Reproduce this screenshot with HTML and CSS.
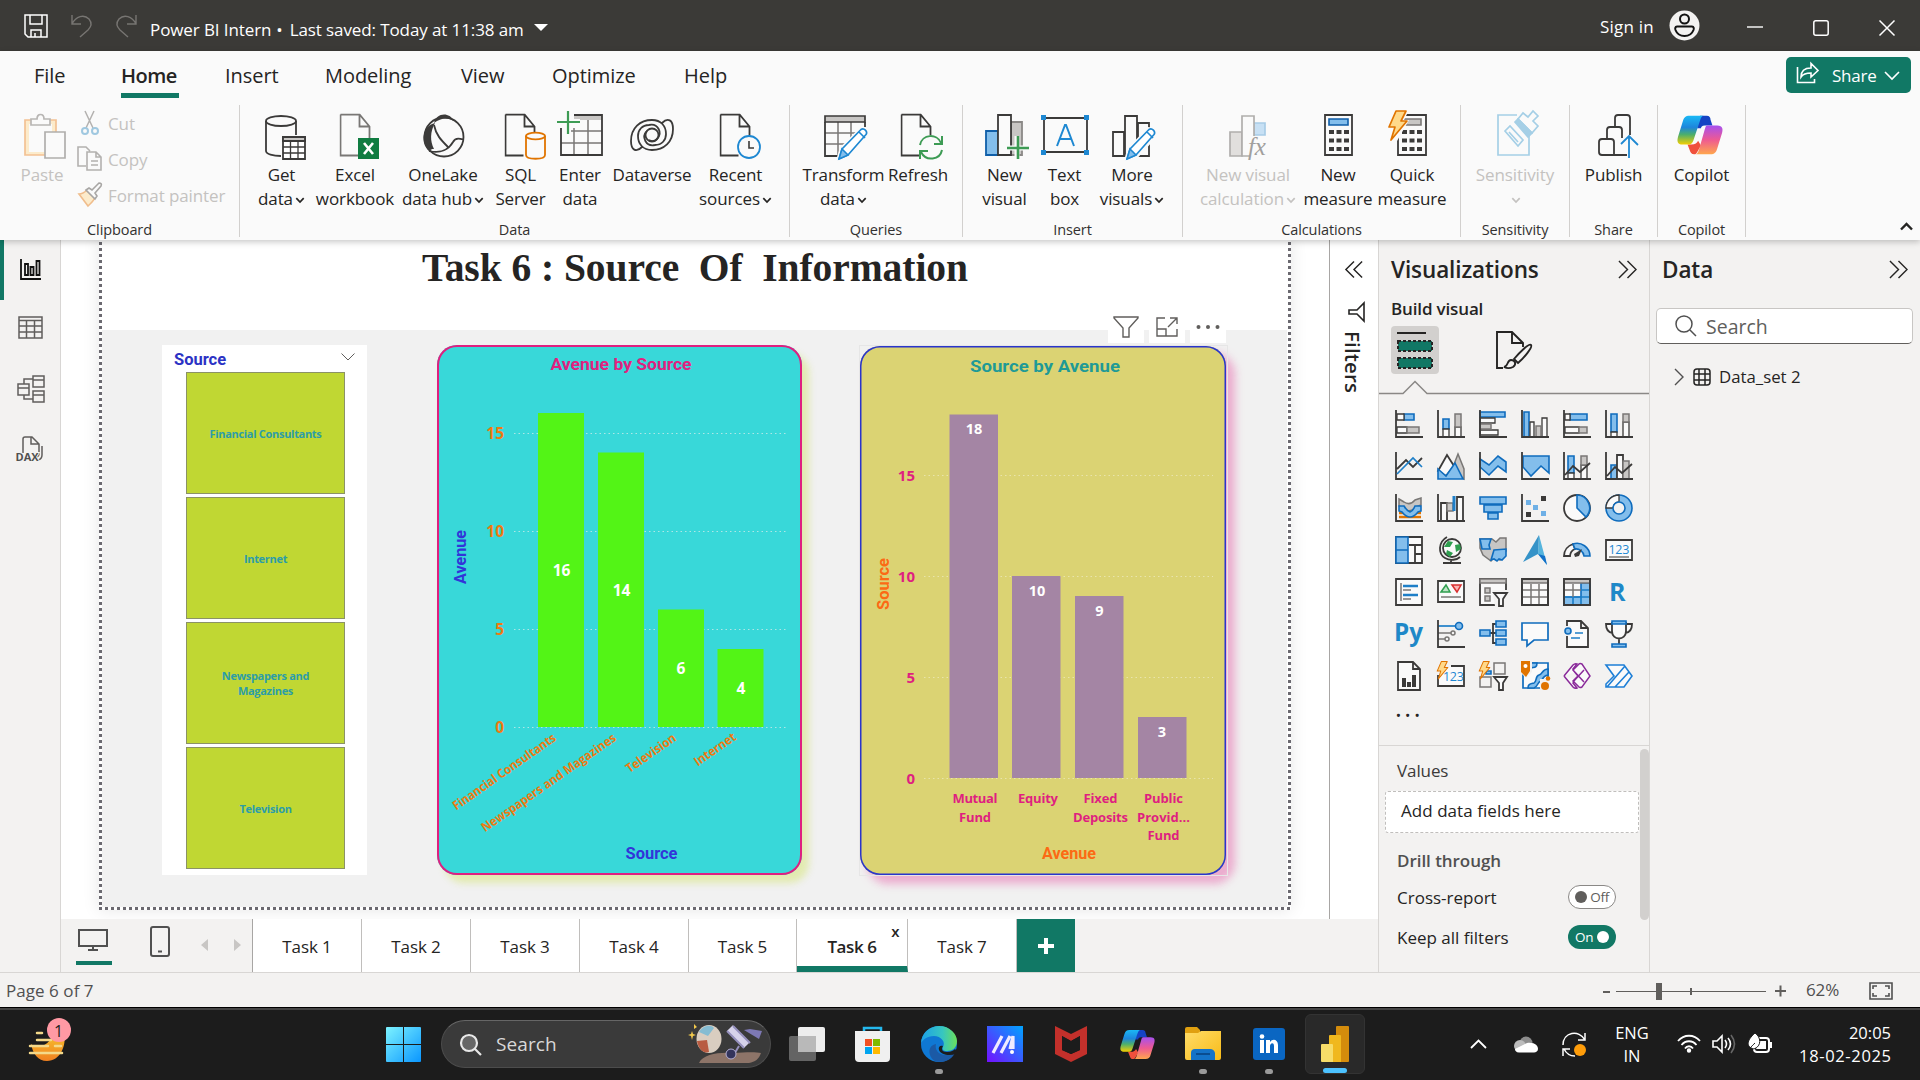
FILE: index.html
```html
<!DOCTYPE html>
<html lang="en">
<head>
<meta charset="utf-8">
<title>Power BI Intern</title>
<link rel="stylesheet" href="styles.css">
</head>
<body>
<svg class="defs" width="0" height="0">
  <defs>
    <linearGradient id="gBlue" x1="0" y1="0" x2="0" y2="1"><stop offset="0" stop-color="#1ab8f5"/><stop offset=".4" stop-color="#1d86dc"/><stop offset=".65" stop-color="#4caf6c"/><stop offset="1" stop-color="#f5cf00"/></linearGradient>
    <linearGradient id="gPink" x1="0" y1="0" x2="0" y2="1"><stop offset="0" stop-color="#a650f0"/><stop offset=".5" stop-color="#ee5a92"/><stop offset="1" stop-color="#ffa64d"/></linearGradient>
    <linearGradient id="gWin" x1="0" y1="0" x2="1" y2="1"><stop offset="0" stop-color="#7df3ff"/><stop offset="1" stop-color="#0a96ff"/></linearGradient>
    <linearGradient id="gMa" x1="0" y1="1" x2="1" y2="0"><stop offset="0" stop-color="#7410ff"/><stop offset="1" stop-color="#00a4ff"/></linearGradient>
    <linearGradient id="gEdge" x1="0" y1="0" x2="1" y2="0"><stop offset="0" stop-color="#1ca0e8"/><stop offset=".6" stop-color="#37c6c0"/><stop offset="1" stop-color="#6be05a"/></linearGradient>
    <linearGradient id="gFolder" x1="0" y1="0" x2="1" y2="1"><stop offset="0" stop-color="#ffdc68"/><stop offset="1" stop-color="#f8bb18"/></linearGradient>
    <linearGradient id="gSun" x1="0" y1="0" x2="0" y2="1"><stop offset="0" stop-color="#f7c52e"/><stop offset="1" stop-color="#f08020"/></linearGradient>
    <symbol id="copilot" viewBox="0 0 48 42">
      <path fill="#1443c4" d="M24 1h7c3 0 4 2 4 4l2 6h-8c-3 0-4 2-4 3l-4 0z"/>
      <path fill="#f0503c" d="M11 31h4c4 0 6-2 7-4l3 5-4 7c-1 2-2 2-3 2-3 0-4-2-5-5z"/>
      <path fill="url(#gBlue)" d="M13 1h15c-2 0-3 2-4 5l-7 21c-1 3-3 4-5 4H6c-6 0-6-4-5-8L6 7c1-4 3-6 7-6z"/>
      <path fill="url(#gPink)" d="M32 11h10c6 0 6 4 5 8l-5 16c-1 4-3 6-7 6H19c2 0 3-2 4-5l6-21c1-3 1-4 3-4z"/>
    </symbol>
    <symbol id="doc" viewBox="0 0 32 44"><path d="M1 1h19l10 12v16M20 1v12h10M1 1v41h18" fill="none" stroke-width="1.8"/></symbol>
    <symbol id="pencil" viewBox="0 0 32 34"><path fill="#fff" stroke="#fafafa" stroke-width="5" d="M2 32l3-10L24 3l6 5-18 20z"/><path fill="#fff" stroke="#1e88d2" stroke-width="1.7" stroke-linejoin="round" d="M2 32l3-10L24 2.5c3-2 7 2 5 5L11 28zM22 5l6 6"/><path fill="#83beec" stroke="#1e88d2" stroke-width="1.5" d="M2 32l3-10 6 6z"/></symbol>
    <symbol id="chev" viewBox="0 0 10 7"><path d="M1.3 1.2L5 5l3.700-3.800" fill="none" stroke="currentColor" stroke-width="1.700"/></symbol>
    <symbol id="collapse" viewBox="0 0 20 20"><path d="M1 1l9 9-9 9M10 1l9 9-9 9" fill="none" stroke="#252423" stroke-width="1.500"/></symbol>
    <symbol id="bolt" viewBox="0 0 20 32"><path fill="#ffd98a" stroke="#e07400" stroke-width="1.700" stroke-linejoin="round" d="M8 1h10l-5 10h6L3 30l4-13H1z"/></symbol>
  </defs>
</svg>

<div class="app">
  <header class="titlebar">
    <div class="quick">
      <svg width="26" height="26" viewBox="0 0 26 26" fill="none" stroke="#fff" stroke-width="1.500"><path d="M2 2h22v22H5l-3-3zM7 2v9h12V2M8 24v-7h10v7M12 20v4"/></svg>
      <svg width="22" height="24" viewBox="0 0 22 24" fill="none" stroke="#777572" stroke-width="1.400"><path d="M1 1v9h9M1 10C5 2 13 0 18 5c4 5 1 9-1 11l-8 7"/></svg>
      <svg width="22" height="24" viewBox="0 0 22 24" fill="none" stroke="#777572" stroke-width="1.400"><path d="M21 1v9h-9M21 10C17 2 9 0 4 5c-4 5-1 9 1 11l8 7"/></svg>
    </div>
    <div class="doc-title">Power BI Intern<i>•</i>Last saved: Today at 11:38 am</div>
    <svg class="title-caret" width="14" height="7" viewBox="0 0 14 7"><path fill="#fff" d="M0 0h14L7 7z"/></svg>
    <div class="signin">Sign in</div>
    <svg class="avatar" width="31" height="31" viewBox="0 0 31 31"><circle cx="15.500" cy="15.500" r="15" fill="#f3f2f1"/><g fill="none" stroke="#111" stroke-width="2"><circle cx="15.500" cy="9" r="4.500"/><path d="M8 16.500h15c2 0 2 2 1.500 3.500-1.500 4-5 6-9 6s-7.500-2-9-6C6 18.500 6 16.500 8 16.500z"/></g></svg>
    <div class="win-buttons">
      <svg width="16" height="16" viewBox="0 0 16 16" fill="none" stroke="#fff" stroke-width="1.400"><path d="M0 7h16"/></svg>
      <svg width="16" height="16" viewBox="0 0 16 16" fill="none" stroke="#fff" stroke-width="1.500"><rect x=".8" y=".8" width="14.400" height="14.400" rx="2"/></svg>
      <svg width="16" height="16" viewBox="0 0 16 16" fill="none" stroke="#fff" stroke-width="1.500"><path d="M.5.5l15 15M15.500.5l-15 15"/></svg>
    </div>
  </header>

  <section class="ribbon">
    <nav class="tabs">
      <a class="t1">File</a><a class="t2 active">Home</a><a class="t3">Insert</a><a class="t4">Modeling</a><a class="t5">View</a><a class="t6">Optimize</a><a class="t7">Help</a>
      <button class="share">
        <svg width="24" height="22" viewBox="0 0 24 22" fill="none" stroke="#fff" stroke-width="1.600"><path d="M1.500 5v15.500h17V17M5 15c0-6 4-9 10-9V1.500l7 7-7 6.500v-4c-5 0-8 1-10 4z"/></svg>
        <span>Share</span>
        <svg width="16" height="9" viewBox="0 0 16 9" fill="none" stroke="#fff" stroke-width="1.600"><path d="M1 1l7 7 7-7"/></svg>
      </button>
    </nav>
    <div class="groups">
      <div class="group g-clip">
        <div class="tools">
          <div class="tool paste disabled">
            <svg width="42" height="50" viewBox="0 0 42 50" fill="none" stroke-width="1.700"><path fill="#fcebcb" stroke="#f3c193" d="M1 10h31v35H1z"/><path fill="#fafafa" stroke="none" d="M5 14h23v28H5z"/><path fill="#fafafa" stroke="#b8b6b4" d="M7 15V9h6c0-6 7-6 7 0h6v6z"/><path fill="#fafafa" stroke="#b0aeac" d="M21 22h20v26H21z"/></svg>
            <span>Paste</span>
          </div>
          <div class="mini disabled">
            <div><svg width="26" height="26" viewBox="0 0 26 26" fill="none" stroke-width="1.500"><path stroke="#b3b1af" d="M8 1l8 17M17 1L9 18"/><g stroke="#a0c8e0" stroke-width="2"><circle cx="8" cy="21" r="3"/><circle cx="18" cy="21" r="3"/></g></svg><span>Cut</span></div>
            <div><svg width="26" height="26" viewBox="0 0 26 26" fill="none" stroke="#b3b1af" stroke-width="1.600"><path d="M9 20H1V1h8l4 4M10 6h9l5 5v13H10zM19 6v5h5M14 15h7M14 19h7"/></svg><span>Copy</span></div>
            <div><svg width="26" height="26" viewBox="0 0 26 26" fill="none" stroke-width="1.600"><path fill="#fcebcb" stroke="#f0bd8c" d="M2 12c3 0 5-1 8-4l8 7c-1 4-4 6-7 9z"/><path fill="#fafafa" stroke="#a8a6a4" d="M9 8l3-2 3 2 7-7c2 0 3 1 2 3l-6 7 2 3-2 3z"/></svg><span>Format painter</span></div>
          </div>
        </div>
        <div class="glabel">Clipboard</div>
      </div>

      <div class="group g-data">
        <div class="tools">
          <div class="tool w65">
            <svg class="ic" viewBox="0 0 48 50" fill="none" stroke="#3b3a39" stroke-width="1.800"><ellipse cx="23" cy="11" rx="15" ry="5"/><path d="M8 11v30c0 3 7 5 15 5M38 11v14"/><path fill="#fff" d="M25 27h22v22H25z"/><path fill="#c8c6c4" d="M25 27h22v4H25z"/><path stroke-width="1.300" d="M25 37h22M25 43h22M32.500 31v18M40 31v18"/></svg>
            <span>Get<br>data<svg class="cv"><use href="#chev"/></svg></span>
          </div>
          <div class="tool w82">
            <svg class="ic" viewBox="0 0 48 50"><use href="#doc" x="8.500" y="3.500" width="32" height="44" stroke="#797775"/><path fill="#107c41" d="M27 28h21v21H27z"/><path d="M33 33l9 11M42 33l-9 11" stroke="#fff" stroke-width="2.600"/></svg>
            <span>Excel<br>workbook</span>
          </div>
          <div class="tool w94">
            <svg class="ic" viewBox="0 0 48 50" fill="none" stroke="#3b3a39" stroke-width="1.800"><circle cx="25" cy="27" r="19.500"/><path fill="#3b3a39" stroke="none" d="M15 13C17 3 30 1 35 11c-7-4-13-3-20 2z"/><path fill="#3b3a39" stroke="none" d="M16 13C3 16 1 33 10 41c3-2 3-2 5-2-4-8-4-17 1-26z"/><path d="M15 15c2 10 7 15 14 22M10 41c12 3 20-2 24-9 3-6 8-2 10-3"/></svg>
            <span>OneLake<br>data hub<svg class="cv"><use href="#chev"/></svg></span>
          </div>
          <div class="tool w61">
            <svg class="ic" viewBox="0 0 48 50" fill="none"><use href="#doc" x="7.500" y="3.500" width="32" height="44" stroke="#3b3a39"/><path fill="#fafafa" stroke="#e07400" stroke-width="1.800" d="M29 26v19c0 5 19 5 19 0V26"/><ellipse cx="38.500" cy="26" rx="9.500" ry="3.400" fill="#fafafa" stroke="#e07400" stroke-width="1.800"/></svg>
            <span>SQL<br>Server</span>
          </div>
          <div class="tool w58">
            <svg class="ic" viewBox="0 0 48 50" fill="none" stroke="#797775" stroke-width="1.500"><path fill="#c8c6c4" stroke="none" d="M18 5h28v5H18z"/><path d="M5 33h41M14 21h32M18 18v27M32 10v35"/><path stroke="#3b3a39" stroke-width="1.800" d="M18 5h28v40H5V18"/><path stroke="#fafafa" stroke-width="6" d="M12 1v23M1 12h23"/><path stroke="#3d9b54" stroke-width="2.200" d="M12 1v23M1 12h23"/></svg>
            <span>Enter<br>data</span>
          </div>
          <div class="tool w86">
            <svg class="ic" viewBox="0 0 48 50" fill="none" stroke="#3b3a39" stroke-width="1.800"><circle cx="24" cy="25" r="6.500"/><path d="M34 13c6-6 11-3 11 6 0 13-9 21-21 21-9 0-14-6-14-14 0-6 4-11 11-11M14 37C8 43 3 40 3 31 3 18 12 10 24 10c9 0 14 6 14 14 0 6-4 11-11 11M21 15c9-2 14 8 8 14-2 2-5 3-8 1M27 35c-9 2-14-8-8-14"/></svg>
            <span>Dataverse</span>
          </div>
          <div class="tool w81">
            <svg class="ic" viewBox="0 0 48 50" fill="none"><use href="#doc" x="7.500" y="3.500" width="32" height="44" stroke="#3b3a39"/><circle cx="37" cy="37" r="11" fill="#fafafa" stroke="#1e88d2" stroke-width="1.800"/><path d="M37 31v7h5" stroke="#3b3a39" stroke-width="1.600"/></svg>
            <span>Recent<br>sources<svg class="cv"><use href="#chev"/></svg></span>
          </div>
        </div>
        <div class="glabel">Data</div>
      </div>

      <div class="group g-query">
        <div class="tools">
          <div class="tool w87">
            <svg class="ic" viewBox="0 0 48 50" fill="none" stroke="#797775" stroke-width="1.500"><path d="M5 23h40M5 34h30M18 12v33M31 12v20"/><path fill="#c8c6c4" stroke="#3b3a39" stroke-width="1.700" d="M5 6h40v6H5z"/><path stroke="#3b3a39" stroke-width="1.800" d="M45 12v5M5 12v34h14"/><use href="#pencil" x="17" y="17" width="32" height="34"/></svg>
            <span>Transform<br>data<svg class="cv"><use href="#chev"/></svg></span>
          </div>
          <div class="tool w62">
            <svg class="ic" viewBox="0 0 48 50" fill="none"><use href="#doc" x="6.500" y="3.500" width="32" height="44" stroke="#3b3a39"/><circle cx="37" cy="37" r="12" fill="#fafafa"/><path stroke="#3d9b54" stroke-width="2" d="M26 35c2-11 17-12 21-2M48 26v8h-8M48 40c-2 10-16 12-21 2M26 49v-8h8"/></svg>
            <span>Refresh</span>
          </div>
        </div>
        <div class="glabel">Queries</div>
      </div>

      <div class="group g-insert">
        <div class="tools">
          <div class="tool w49">
            <svg class="ic" viewBox="0 0 48 50" fill="none" stroke-width="1.800"><path fill="#83beec" stroke="#0f5ea8" d="M5 21h12v24H5z"/><path fill="#c8c6c4" stroke="#8a8886" d="M30 12h11v33H30z"/><path fill="#fafafa" stroke="#3b3a39" d="M17 5h13v40H17z"/><path stroke="#fafafa" stroke-width="5" d="M36 26v24M26 38h22"/><path stroke="#3d9b54" stroke-width="2.600" d="M37 26v23M26 38h22"/></svg>
            <span>New<br>visual</span>
          </div>
          <div class="tool w71">
            <svg class="ic" viewBox="0 0 48 50" fill="none"><path stroke="#3b3a39" stroke-width="1.800" d="M3 8h43v34H3z"/><path fill="#1e88d2" d="M0 5h5v5H0zM43 5h5v5h-5zM0 40h5v5H0zM43 40h5v5h-5z"/><path stroke="#1e88d2" stroke-width="2" d="M16 36l8-21h1l8 21M19 29h11"/></svg>
            <span>Text<br>box</span>
          </div>
          <div class="tool w64">
            <svg class="ic" viewBox="0 0 48 50" fill="#fafafa" stroke="#3b3a39" stroke-width="1.800"><path d="M5 22h11v24H5zM30 13h11v33H30zM17 6h12v40H17z"/><use href="#pencil" x="17" y="17" width="32" height="34"/></svg>
            <span>More<br>visuals<svg class="cv"><use href="#chev"/></svg></span>
          </div>
        </div>
        <div class="glabel">Insert</div>
      </div>

      <div class="group g-calc">
        <div class="tools">
          <div class="tool w110 disabled">
            <svg class="ic" viewBox="0 0 48 50" stroke="#b0aeac" stroke-width="1.700"><path fill="#e1dfdd" d="M6 22h12v24H6z"/><path fill="#c7e0f4" stroke="#a8cce6" d="M30 13h11v12H30z"/><path fill="#fafafa" d="M18 6h12v40H18z"/><path fill="#fafafa" stroke="none" d="M26 26h8v22h-8z"/><text class="fx" x="24" y="45">fx</text></svg>
            <span>New visual<br>calculation<svg class="cv"><use href="#chev"/></svg></span>
          </div>
          <div class="tool w70">
            <svg class="ic" viewBox="0 0 48 50" fill="none" stroke="#3b3a39"><path fill="#fafafa" stroke-width="1.800" d="M11 5h27v40H11z"/><path fill="#83beec" stroke="#0f5ea8" stroke-width="1.600" d="M15 9h19v6H15z"/><path stroke-width="4" stroke-dasharray="5 2.500" d="M15 22h20M15 30.500h20M15 39h20"/></svg>
            <span>New<br>measure</span>
          </div>
          <div class="tool w78">
            <svg class="ic" viewBox="0 0 48 50" fill="none" stroke="#3b3a39"><path fill="#fafafa" stroke-width="1.800" d="M10 5h28v40H10z"/><path fill="#c8c6c4" stroke="#797775" stroke-width="1.600" d="M15 9h18v6H15z"/><path stroke-width="4" stroke-dasharray="5 2.500" d="M14 22h20M14 30.500h20M14 39h20"/><path fill="#fafafa" stroke="none" d="M0 0h21l-5 10h5L9 31 0 33z"/><use href="#bolt" x="0" y="0" width="20" height="32"/></svg>
            <span>Quick<br>measure</span>
          </div>
        </div>
        <div class="glabel">Calculations</div>
      </div>

      <div class="group g-sens">
        <div class="tools">
          <div class="tool w108 disabled">
            <svg class="ic" viewBox="0 0 48 50" fill="none" stroke="#a5cfe6" stroke-width="1.700"><path d="M26 5H7v40h31V26M14 21l5-5 13 14-5 6zM18 22l9 10"/><path fill="#fafafa" d="M27 9l5-6 5 4 5-6 5 5-5 5 5 5-6 7z"/><path fill="#a5cfe6" d="M24 12l3-3 14 14-4 4z"/></svg>
            <span>Sensitivity<br><svg class="cv"><use href="#chev"/></svg></span>
          </div>
        </div>
        <div class="glabel">Sensitivity</div>
      </div>

      <div class="group g-share">
        <div class="tools">
          <div class="tool w88">
            <svg class="ic" viewBox="0 0 48 50" fill="none" stroke="#3b3a39" stroke-width="1.800"><path d="M25 16V8q0-3 3-3h9q3 0 3 3v17M17 28v-8q0-3 3-3h9q3 0 3 3v8M24 45V32q0-3-3-3h-9q-3 0-3 3v10q0 3 3 3h25"/><path stroke="#1e88d2" d="M39 48V26M31 34l8-8 9 9"/></svg>
            <span>Publish</span>
          </div>
        </div>
        <div class="glabel">Share</div>
      </div>

      <div class="group g-copilot">
        <div class="tools">
          <div class="tool w88">
            <svg class="ic cop" viewBox="0 0 48 50"><use href="#copilot" x="0" y="4.500" width="46" height="41"/></svg>
            <span>Copilot</span>
          </div>
        </div>
        <div class="glabel">Copilot</div>
      </div>
      <div class="ribbon-end"><svg width="13" height="9" viewBox="0 0 13 9"><path d="M1 7.500L6.500 2 12 7.500" fill="none" stroke="#252423" stroke-width="2.400"/></svg></div>
    </div>
  </section>

  <main class="work">
    <div class="left">
      <aside class="rail">
        <div class="on"><svg width="28" height="28" viewBox="0 0 28 28" fill="none" stroke="#111" stroke-width="1.800"><path d="M4 3v20h20M8 8h3v11H8zM13.500 11h3v8h-3zM19.500 5h3v14h-3z"/></svg></div>
        <div><svg width="28" height="28" viewBox="0 0 28 28" fill="none" stroke="#605e5c" stroke-width="1.500"><path d="M2 2h23v21H2zM2 5.500h23M2 11h23M2 17h23M9.500 5v18M17.500 5v18"/></svg></div>
        <div><svg width="28" height="28" viewBox="0 0 28 28" fill="none" stroke="#605e5c" stroke-width="1.500"><path d="M1 9h11v11H1zM1 13h11M16 1h11v11H16zM16 5h11M16 16h11v11H16zM16 20h11M7 9V4h9M7 20v4h9"/></svg></div>
        <div><svg width="28" height="28" viewBox="0 0 28 28" fill="none" stroke="#605e5c" stroke-width="1.500"><path d="M6 18V4q0-2 2-2h7l7 7v10q0 2-2 3M14 2v7h8M25 11v9q0 4-4 5"/><text class="dax" x="-1.500" y="25.500">DAX</text></svg></div>
      </aside>
      <div class="center">
        <div class="top">
          <div class="canvas">
            <div class="page">
              <h1>Task 6 : Source  Of  Information</h1>
              <div class="backdrop"></div>
              <div class="slicer">
                <div class="slicer-head"><span>Source</span><svg width="14" height="8" viewBox="0 0 14 8"><path d="M.5.5L7 7l6.500-6.500" fill="none" stroke="#605e5c"/></svg></div>
                <div class="tiles"><div>Financial Consultants</div><div>Internet</div><div>Newspapers and<br>Magazines</div><div>Television</div></div>
              </div>
              <svg class="chart c1" width="365" height="530" viewBox="437 345 365 530">
                <g class="grid1"><path d="M514 433.500h274M514 531.500h274M514 629.500h274M514 727.500h274"/></g>
                <g fill="#53f416"><path d="M538 413h46v314h-46zM598 452.500h46V727h-46zM658 609.500h46V727h-46zM717.500 649h46v78h-46z"/></g>
                <text class="din" x="621" y="370" textLength="141" lengthAdjust="spacingAndGlyphs" fill="#e0217f">Avenue by Source</text>
                <text class="din" x="651.500" y="859" textLength="52" lengthAdjust="spacingAndGlyphs" fill="#3235d8">Source</text>
                <text class="din" transform="translate(465.500 557) rotate(-90)" textLength="54" lengthAdjust="spacingAndGlyphs" fill="#3235d8">Avenue</text>
                <g class="ax1"><text x="504" y="438.500">15</text><text x="504" y="536.500">10</text><text x="504" y="634.500">5</text><text x="504" y="732.500">0</text></g>
                <g class="val"><text x="561.500" y="576">16</text><text x="621.500" y="596">14</text><text x="681" y="674">6</text><text x="741" y="694">4</text></g>
                <g class="cat1">
                  <text transform="translate(557 740) rotate(-35)" textLength="123" lengthAdjust="spacingAndGlyphs">Financial Consultants</text>
                  <text transform="translate(617 740) rotate(-35)" textLength="161" lengthAdjust="spacingAndGlyphs">Newspapers and Magazines</text>
                  <text transform="translate(677 740) rotate(-35)" textLength="58" lengthAdjust="spacingAndGlyphs">Television</text>
                  <text transform="translate(737 739) rotate(-35)" textLength="48" lengthAdjust="spacingAndGlyphs">Internet</text>
                </g>
              </svg>
              <div class="select-box"></div>
              <svg class="chart c2" width="366" height="529" viewBox="860 346 366 529">
                <g class="grid2"><path d="M924 475.500h289M924 576.500h289M924 677.500h289M924 778.500h289"/></g>
                <g fill="#a485a4"><path d="M949.500 414.500h48.500v363.500h-48.500zM1012 576h48.500v202H1012zM1075 596h48.500v182H1075zM1138 717h48.500v61H1138z"/></g>
                <text class="din" x="1045" y="371.500" textLength="150" lengthAdjust="spacingAndGlyphs" fill="#1f9a96">Source by Avenue</text>
                <text class="din" x="1069" y="859" textLength="54" lengthAdjust="spacingAndGlyphs" fill="#fc6a14">Avenue</text>
                <text class="din" transform="translate(889 584) rotate(-90)" textLength="52" lengthAdjust="spacingAndGlyphs" fill="#fc6a14">Source</text>
                <g class="ax2"><text x="915" y="480.500">15</text><text x="915" y="581.500">10</text><text x="915" y="682.500">5</text><text x="915" y="783.500">0</text></g>
                <g class="val v2"><text x="974" y="434">18</text><text x="1037" y="596">10</text><text x="1099.500" y="616">9</text><text x="1162" y="737">3</text></g>
                <g class="cat2">
                  <text x="975" y="803" textLength="45">Mutual</text><text x="975" y="822" textLength="32">Fund</text>
                  <text x="1038" y="803" textLength="40">Equity</text>
                  <text x="1100.500" y="803" textLength="34">Fixed</text><text x="1100.500" y="822" textLength="55">Deposits</text>
                  <text x="1163.500" y="803" textLength="39">Public</text><text x="1163.500" y="822" textLength="53">Provid...</text><text x="1163.500" y="840" textLength="32">Fund</text>
                </g>
              </svg>
              <div class="vis-tools">
                <span><svg width="26" height="24" viewBox="0 0 26 24"><path d="M1 2h24v1l-9 10v9h-6v-9L1 3z"/></svg></span>
                <span><svg width="24" height="22" viewBox="0 0 24 22"><path d="M10 2H2v18h20v-7M2 13h9v7M15 2h7v6M13 11l9-9"/></svg></span>
                <span><svg width="24" height="22" viewBox="0 0 24 22"><g fill="#605e5c" stroke="none"><circle cx="2.500" cy="11" r="2"/><circle cx="12" cy="11" r="2"/><circle cx="21.500" cy="11" r="2"/></g></svg></span>
              </div>
              <i class="dots dl"></i><i class="dots dr"></i><i class="dots db"></i>
            </div>
          </div>
          <aside class="filters">
            <svg class="fx-col" width="18" height="19" viewBox="0 0 20 20"><path d="M19 1l-9 9 9 9M10 1l-9 9 9 9" fill="none" stroke="#252423" stroke-width="1.600"/></svg>
            <svg width="17" height="20" viewBox="0 0 17 20"><path d="M16 1v18l-7-7H1V8h8z" fill="none" stroke="#252423" stroke-width="1.600"/></svg>
            <b>Filters</b>
          </aside>
        </div>
        <div class="pages">
          <div class="modes">
            <div class="desk"><svg width="30" height="23" viewBox="0 0 30 23" fill="none" stroke="#505050" stroke-width="2"><path d="M1 1h28v16H1zM15 17v4M10 21h10"/></svg></div>
            <svg class="phone" width="20" height="31" viewBox="0 0 20 31" fill="none" stroke="#505050" stroke-width="2"><rect x="1" y="1" width="18" height="29" rx="2"/><path d="M8 25.500h4"/></svg>
            <svg class="prev" width="40" height="12" viewBox="0 0 40 12" fill="#c8c6c4"><path d="M7 0v12L0 6zM33 0v12l7-6z"/></svg>
          </div>
          <div class="pt">Task 1</div><div class="pt">Task 2</div><div class="pt">Task 3</div><div class="pt">Task 4</div><div class="pt">Task 5</div>
          <div class="pt cur">Task 6<i>x</i></div>
          <div class="pt">Task 7</div>
          <div class="plus"><svg width="16" height="16" viewBox="0 0 16 16"><path d="M8 0v16M0 8h16" stroke="#fff" stroke-width="4"/></svg></div>
        </div>
      </div>
    </div>

    <aside class="viz">
      <div class="pane-head"><h2>Visualizations</h2><svg width="19" height="19"><use href="#collapse"/></svg></div>
      <h3>Build visual</h3>
      <div class="modes2">
        <div class="bm"><svg width="38" height="38" viewBox="0 0 38 38"><path d="M1 2h29" stroke="#252423" stroke-width="2"/><g fill="#117865" stroke="#252423" stroke-width="2" stroke-dasharray="3 2"><path d="M2 10h34v10H2zM2 27h34v10H2z"/></g></svg></div>
        <svg width="38" height="38" viewBox="0 0 38 38" fill="none" stroke="#252423" stroke-width="1.900"><path d="M8 37H2V1h15l11 11v4M17 1v11h11"/><path fill="#f3f2f1" d="M36 14c2 2-7 13-13 18l-4-4c5-6 15-16 17-14z"/><path fill="#f3f2f1" d="M9 36c4 0 3-7 7-7 4 0 6 4 2 7-2 1-5 2-9 0z"/></svg>
      </div>
      <svg class="notch" width="270" height="15" viewBox="0 0 270 15"><path d="M0 12.500h24L36 .5l12 12h222" fill="none" stroke="#8a8886" stroke-width="1.500"/></svg>
      <div class="icons">
        <svg viewBox="0 0 28 28"><path class="b" d="M9 4h10v6H9z"/><path class="w" d="M2 4h7v6H2zM2 17h10v6H2z"/><path class="g" d="M12 17h12v6H12z"/><path class="k" d="M1 0v27h27"/></svg>
        <svg viewBox="0 0 28 28"><path class="b" d="M6 9h6v10H6z"/><path class="w" d="M6 19h6v8H6zM18 17h6v10h-6z"/><path class="g" d="M18 4h6v13h-6z"/><path class="k" d="M1 0v27h27"/></svg>
        <svg viewBox="0 0 28 28"><path class="b" d="M1 2h25v5H1z"/><path class="w" d="M1 8h15v5H1zM1 20h18v5H1z"/><path class="g" d="M1 14h11v5H1z"/><path class="k" d="M1 0v27h27"/></svg>
        <svg viewBox="0 0 28 28"><path class="b" d="M3 2h5v25H3z"/><path class="w" d="M9 12h4v15H9zM21 8h5v19h-5z"/><path class="g" d="M15 16h5v11h-5z"/><path class="k" d="M1 0v27h27"/></svg>
        <svg viewBox="0 0 28 28"><path class="b" d="M7 4h17v6H7z"/><path class="w" d="M2 4h5v6H2zM2 17h14v6H2z"/><path class="g" d="M16 17h8v6h-8z"/><path class="k" d="M1 0v27h27"/></svg>
        <svg viewBox="0 0 28 28"><path class="b" d="M6 4h6v18H6z"/><path class="w" d="M6 22h6v5H6zM18 12h6v15h-6z"/><path class="g" d="M18 4h6v8h-6z"/><path class="k" d="M1 0v27h27"/></svg>

        <svg viewBox="0 0 28 28"><path class="k" d="M1 0v27h27M2 17l9-9 7 7 9-9"/><path class="l" d="M2 22L18 6l9 9"/></svg>
        <svg viewBox="0 0 28 28"><path class="g" d="M14 20l7-18 6 15v10z"/><path class="w k2" d="M1 19L10 3l7 11-8 10z"/><path class="b" d="M1 17l8 7 9-13 8 16H1z"/></svg>
        <svg viewBox="0 0 28 28"><path class="b" d="M1 7l9 6 9-9 8 6v10l-8-6-9 9-9-8z"/><path class="k" d="M1 0v27h27"/></svg>
        <svg viewBox="0 0 28 28"><path class="b" d="M2 4h26v17l-8-7-10 10-8-9z"/><path class="k" d="M1 0v27h27"/></svg>
        <svg viewBox="0 0 28 28"><path class="b" d="M5 4h6v17H5z"/><path class="w" d="M5 21h6v6H5zM18 13h6v14h-6z"/><path class="g" d="M18 4h6v9h-6z"/><path class="k" d="M1 0v27h27M2 23l8-9 7 6 10-9"/></svg>
        <svg viewBox="0 0 28 28"><path class="b" d="M6 13h6v14H6z"/><path class="w k2" d="M12 3h6v24h-6z"/><path class="g" d="M18 9h6v18h-6z"/><path class="k" d="M1 0v27h27M2 24l8-9 7 6 10-9"/></svg>

        <svg viewBox="0 0 28 28"><path class="o" d="M4 19h22M4 23h22"/><path class="g" d="M4 5l5 3q6 4 11-2l6-2v7l-5 2q-7 7-13 1l-4-2z"/><path class="b" d="M4 12h5q3 5 6 6 3-1 5-6h6v5l-3 1q-8 10-16 0l-3-1z"/><path class="k" d="M1 0v27h27"/></svg>
        <svg viewBox="0 0 28 28"><path class="w k2" d="M4 9h6v18H4zM20 3h6v24h-6z"/><path class="g" d="M10 9h6v8h-6z"/><path class="l t" d="M17 2v15"/><path class="k" d="M1 0v27h27"/></svg>
        <svg viewBox="0 0 28 28"><path class="b" d="M1 3h26v7H1zM5 11h18v7H5zM9 19h10v6H9z"/></svg>
        <svg viewBox="0 0 28 28"><path fill="#3b3a39" d="M20 2h5v5h-5zM5 18h5v5H5z"/><path fill="#6eb0e6" d="M5 6h5v5H5zM12 11h5v5h-5zM20 17h5v5h-5z"/><path class="k" d="M1 0v27h27"/></svg>
        <svg viewBox="0 0 28 28"><circle class="w k2" cx="14" cy="14" r="13"/><path class="b" d="M14 1a13 13 0 0 1 9 22l-9-9z"/></svg>
        <svg viewBox="0 0 28 28"><circle class="b" cx="14" cy="14" r="13"/><path class="w" d="M14 1A13 13 0 0 0 1 14h7a6 6 0 0 1 6-6z"/><circle cx="14" cy="14" r="6" fill="#f3f2f1" stroke="#0f6cbd" stroke-width="1.600"/></svg>

        <svg viewBox="0 0 28 28"><path class="w k2" d="M1 1h26v26H1zM14 9h13M20 9v18M20 18h7"/><path class="b" d="M1 1h12v26H1zM1 14h12"/></svg>
        <svg viewBox="0 0 28 28"><circle class="w k2" cx="15" cy="12" r="9"/><path fill="#2f9e4f" d="M11 5l5 1-3 5-6 0zM18 9l5-1 1 5-5 3zM10 14l6 3-3 4-4-3z"/><path class="k" d="M10 1C1 6 1 18 8 22c5 3 12 2 15-1M14 23v4M6 27h18"/></svg>
        <svg viewBox="0 0 28 28"><path class="g" d="M1 3h12l4 3 4-4h6v13l-6 9-6-3-3 4-8-6-3-7z"/><path class="b" d="M1 3h11l-2 6 1 4H3zM15 14l12-1v7l-4 4-3-1-2 2-3-2-3 1z"/></svg>
        <svg viewBox="0 0 28 28"><path fill="#55b4dd" d="M18-1l8 30-9-11z"/><path fill="#3593c8" d="M18-1L2 26l15-8z"/><path fill="#1270c8" d="M17 18l9 11-2-9z"/></svg>
        <svg viewBox="0 0 28 28"><path class="w k2" d="M1 20a13 13 0 0 1 9-12l2 5a8 8 0 0 0-5 7z"/><path class="b" d="M10 8a13 13 0 0 1 17 12h-6a8 8 0 0 0-9-7z"/><path fill="#3b3a39" d="M19 13l-3 7-4 1-1-3z"/></svg>
        <svg viewBox="0 0 28 28"><path class="w k2" d="M1 4h26v20H1z"/><path class="gg" d="M4 21h20"/><text class="n123" x="3.500" y="18">123</text></svg>

        <svg viewBox="0 0 28 28"><path class="w k2" d="M1 1h26v26H1z"/><path class="l t2" d="M8 8h15M8 17h15"/><path class="gg" d="M6 5v18M8 12h8M8 21h8"/></svg>
        <svg viewBox="0 0 28 28"><path class="w k2" d="M1 3h26v21H1z"/><path fill="#bfe3c6" stroke="#2f9e4f" stroke-width="1.500" d="M4 14l5-7 4 7z"/><path fill="#f7b4b4" stroke="#d83030" stroke-width="1.500" d="M15 7h9l-4 7z"/><path class="gg" d="M4 19h20"/></svg>
        <svg viewBox="0 0 28 28"><path class="w k2" d="M1 1h26v26H1z"/><path class="g" d="M1 1h26v4H1zM6 10h5v5H6zM6 18h5v5H6z"/><path fill="#f3f2f1" d="M13 12h15v16H16z"/><path class="w k2" d="M15 15h13l-4 6v7h-4v-7z"/></svg>
        <svg viewBox="0 0 28 28"><path class="w k2" d="M1 1h26v26H1z"/><path class="g" d="M1 1h26v4H1z"/><path class="gg" d="M2 12h24M2 19h24M10 6v20M18 6v20"/><path class="k" d="M1 1h26v26H1z"/></svg>
        <svg viewBox="0 0 28 28"><path class="w" d="M1 1h26v26H1z"/><path class="b" d="M18 5h9v22H1v-8h17z"/><path class="l" d="M10 19v8M18 19v8M1 19h26M18 12h9"/><path class="gg" d="M2 12h16M10 6v13"/><path class="g" d="M1 1h26v4H1z"/><path class="k" d="M1 1h26v26H1z"/></svg>
        <svg viewBox="0 0 28 28"><text class="rpy" x="4" y="23">R</text></svg>

        <svg viewBox="0 0 28 28"><text class="rpy" x="-1" y="21" textLength="29" lengthAdjust="spacingAndGlyphs">Py</text></svg>
        <svg viewBox="0 0 28 28"><path class="l" d="M1 6h19"/><circle class="b" cx="22" cy="6" r="3.500"/><path class="gg" d="M1 13h13M1 19h7"/><circle cx="16" cy="13" r="2" class="gg"/><circle cx="10" cy="19" r="2" class="gg"/><path class="k" d="M1 0v27h27"/></svg>
        <svg viewBox="0 0 28 28"><path class="k" d="M10 13h8M14 3v21M14 4h4M14 23h4"/><path class="b" d="M1 10h10v6H1zM17 1h10v6H17zM17 10h10v6H17zM17 19h10v6H17z"/></svg>
        <svg viewBox="0 0 28 28"><path class="w bubble" d="M1 3h26v17H13l-7 6v-6H1z"/></svg>
        <svg viewBox="0 0 28 28"><path class="w k2" d="M4 1h14l7 7v19H4zM18 1v7h7"/><path fill="#f3f2f1" d="M1 6h7v10H1z"/><circle class="b" cx="5" cy="11" r="3"/><path class="l" d="M12 13h8M8 18h9"/></svg>
        <svg viewBox="0 0 28 28"><path class="w k2" d="M7 3h14v8c0 10-14 10-14 0zM7 4H1c0 5 2 8 6 9M21 4h6c0 5-2 8-6 9M14 18v6"/><path class="b" d="M7 1h14v3H7zM7 24h14v3H7z"/></svg>

        <svg viewBox="0 0 28 30"><path class="w k2" d="M3 1h15l7 7v21H3zM18 1v7h7"/><path fill="#3b3a39" d="M7 17h4v9H7zM12 21h4v5h-4zM17 14h4v12h-4z"/></svg>
        <svg viewBox="0 0 28 30"><path class="w k2" d="M14 5h13v20H1V14"/><text class="n123" x="6" y="20">123</text><use href="#bolt" x="-1" y="0" width="13" height="19"/></svg>
        <svg viewBox="0 0 28 30"><path class="w gg" d="M15 2h11v11H15zM1 16h11v10H1z"/><path class="b" d="M7 10h5v3H7z"/><path fill="#f3f2f1" d="M13 14h15v16H16z"/><path class="w k2" d="M15 16h13l-4 6v7h-4v-7z"/><use href="#bolt" x="-1" y="0" width="13" height="19"/></svg>
        <svg viewBox="0 0 28 30"><path class="w bubble" d="M2 2h25v25H2z"/><path class="b" d="M27 8c-6 0-5 5-9 6s-2 7-5 8c-4 1-6 1-6 5h6c4-1 3-6 7-7 2-1 1-5 7-6zM10 2h6c0 5-3 4-6 5z"/><path fill="#f3f2f1" d="M19 18h10v12H19zM-1-1h12v12l-6 6-6-6z"/><path fill="#e07400" d="M0 0h9v10l-4 6-5-5z"/><circle cx="4.500" cy="5" r="2" fill="#fff"/><circle cx="24" cy="25" r="4" fill="#e07400"/><circle cx="27" cy="17.500" r="2.300" fill="#e07400"/></svg>
        <svg class="flow" viewBox="0 0 28 30" fill="#fafafa" stroke="#8a2a9a" stroke-width="1.500"><path d="M1 15L10 4q2-2 4-1l-4 5 3 3M1 15l9 11q2 2 4 1l-4-5 3-3"/><path d="M10 9l6-6q1-1 3 0l8 12-8 11q-2 1-3 0l-6-6 5-5zM10 9l11 12M10 21L21 9"/></svg>
        <svg viewBox="0 0 28 30" fill="#fafafa" stroke="#1e7fd6" stroke-width="1.600"><path d="M1 4h18l8 11-8 11H1v-3l8-8zM2 26L20 5M10 26L24 11"/></svg>
      </div>
      <div class="more">...</div>
      <div class="fields">
        <div class="f-main">
          <p>Values</p>
          <div class="well">Add data fields here</div>
          <p class="dt">Drill through</p>
          <div class="row"><span>Cross-report</span><span class="tg off"><i></i>Off</span></div>
          <div class="row"><span>Keep all filters</span><span class="tg">On<i></i></span></div>
        </div>
        <div class="scroll"></div>
      </div>
    </aside>

    <aside class="data">
      <div class="pane-head"><h2>Data</h2><svg width="19" height="19"><use href="#collapse"/></svg></div>
      <div class="search"><svg width="22" height="22" viewBox="0 0 22 22" fill="none" stroke="#505050" stroke-width="1.500"><circle cx="9" cy="9" r="8"/><path d="M15 15l6 6"/></svg><span>Search</span></div>
      <div class="tree"><svg width="10" height="18" viewBox="0 0 10 18" fill="none" stroke="#505050" stroke-width="1.400"><path d="M1 1l8 8-8 8"/></svg><svg width="18" height="18" viewBox="0 0 18 18" fill="none" stroke="#252423" stroke-width="1.500"><rect x="1" y="1" width="16" height="16" rx="3"/><path d="M6 1v16M12 1v16M1 6h16M1 12h16"/></svg><span>Data_set 2</span></div>
    </aside>
  </main>

  <footer class="status">
    <span class="pg">Page 6 of 7</span>
    <svg class="zoomer" width="190" height="20" viewBox="1600 980 190 20" stroke="#605e5c" fill="none"><path stroke-width="2" d="M1603 991h7M1775 990h11M1780.500 984.500v11"/><path d="M1616 990.500h150"/><path stroke-width="2" d="M1691 987v7"/><path fill="#605e5c" stroke="none" d="M1656 982h6v17h-6z"/></svg>
    <span class="pct">62%</span>
    <svg class="fit" width="24" height="18" viewBox="0 0 24 18" fill="none" stroke="#505050" stroke-width="1.600"><path d="M1 1h22v16H1zM4 7V4h4M16 4h4v3M20 11v3h-4M8 14H4v-3"/></svg>
  </footer>

  <div class="taskbar">
    <div class="weather">
      <svg width="44" height="46" viewBox="0 0 44 46"><path fill="url(#gSun)" d="M2 25C7 30 22 28 24 13h11c3 14-4 29-17 29C9 42 4 35 2 25z"/><path d="M8 14h5M8 21h14M1 27h18M26 27h6M1 34h32" stroke="#f4d98a" stroke-width="2.500" stroke-linecap="round"/><circle cx="30" cy="11" r="12" fill="#ff99a4"/></svg><b>1</b>
    </div>
    <svg class="win" width="35" height="35" viewBox="0 0 35 35"><path fill="url(#gWin)" d="M0 1q0-1 1-1h16v17H0zM18 0h16q1 0 1 1v16H18zM0 18h17v17H1q-1 0-1-1zM18 18h17v16q0 1-1 1H18z"/></svg>
    <div class="tsearch">
      <svg width="23" height="23" viewBox="0 0 23 23" fill="#666" stroke="#e8e8e8" stroke-width="2.200"><circle cx="10" cy="10" r="8"/><path d="M16 16l6 6"/></svg>
      <span>Search</span>
      <svg class="thumb" width="74" height="40" viewBox="0 0 74 40"><path d="M10 39c4-9 20-11 34-10 14-1 24-1 28 0-2 6-6 9-12 10z" fill="#8d7468"/><ellipse cx="20" cy="15" rx="12.500" ry="14" fill="#d9cdc0"/><path fill="#b85c42" d="M8 17l10-1 2 12c-6 2-11-4-12-11z"/><path fill="#85bcd2" d="M10 8c4-7 12-8 15-4l-6 8z"/><path fill="#f2c94c" d="M3 7l1 3 3 1-3 1-1 4-1-4-3-1 3-1zM5 0l3 3-3 2z"/><path stroke="#d6d2ea" stroke-width="8" d="M41 4l17 17"/><path stroke="#9690bd" stroke-width="2" d="M38 7l17 17M44 2l17 17M50 22l-6 10"/><path fill="#7d78b4" d="M55 6l15 9 3-8-12-2z"/><circle cx="42" cy="30" r="5" fill="#33345c" stroke="#b5b0d5"/></svg>
    </div>
    <div class="apps">
      <div><svg width="36" height="36" viewBox="0 0 36 36"><rect x="9" y="1" width="27" height="25" rx="2" fill="#ededed"/><rect y="10" width="27" height="25" rx="2" fill="#6d6d6d" opacity=".9"/><path fill="#b9b9b9" d="M9 10h18v16H9z"/></svg></div>
      <div><svg width="36" height="36" viewBox="0 0 36 36"><path d="M9 8V2h17v6" fill="none" stroke="#24b8ee" stroke-width="2.500"/><path fill="#f0f0f0" d="M0 5h35v27q0 4-4 4H4q-4 0-4-4z"/><path fill="#f25022" d="M10 13h7v7h-7z"/><path fill="#7fba00" d="M18 13h7v7h-7z"/><path fill="#00a4ef" d="M10 21h7v7h-7z"/><path fill="#ffb900" d="M18 21h7v7h-7z"/></svg></div>
      <div class="run"><svg width="36" height="36" viewBox="0 0 36 36"><circle cx="18" cy="18" r="18" fill="#0f78d4"/><path fill="url(#gEdge)" d="M0 18C0 6 10 0 18 0c11 0 18 8 18 15 0 7-5 10-10 10-4 0-5-2-4-4 3-5-2-11-9-11C6 10 1 14 0 18z"/><path fill="#1b5aa6" d="M15 18c-2 7 5 15 19 9-5 9-14 10-20 8-6-3-9-15 1-17z"/><path fill="#1c1c1c" d="M22 20c-2 3-1 6 4 6 4 0 7-2 8-3l3 3-2 2c-7 2-15 1-17-4-1-3 1-5 4-4z"/></svg></div>
      <div><svg width="36" height="36" viewBox="0 0 36 36"><path fill="url(#gMa)" d="M0 0h36v36H0z"/><path d="M6 27l9-17M14 27l9-17M23 23l3-13v13" stroke="#f0eaff" stroke-width="3.200" fill="none"/><circle cx="25" cy="26" r="2" fill="#fff"/></svg></div>
      <div><svg width="32" height="36" viewBox="0 0 32 36"><path fill="#c3302b" d="M0 0l16 8L32 0v28l-16 8-16-8zM7 10v14l9 4 9-4V10l-9 5z"/><path fill="#1c1c1c" d="M7 10l9 5 9-5v14l-9 4-9-4z"/></svg></div>
      <div><svg width="35" height="31" viewBox="0 0 48 42"><use href="#copilot" width="48" height="42"/></svg></div>
      <div class="run"><svg width="36" height="34" viewBox="0 0 36 34"><path fill="#e0a010" d="M0 2q0-2 2-2h10l3 3v8H0z"/><path fill="url(#gFolder)" d="M0 6h13l3-2h20v27q0 2-2 2H2q-2 0-2-2z"/><path fill="#1473c8" d="M6 33v-7q0-4 4-4h15q4 0 5 4v7z"/><path d="M11 27h14" stroke="#0a4d90" stroke-width="2"/></svg></div>
      <div class="run"><svg width="32" height="32" viewBox="0 0 32 32"><rect width="32" height="32" rx="3" fill="#0a66c2"/><path fill="#fff" d="M7 12h4v13H7zM13 12h4v2c3-4 8-2 8 3v8h-4v-7c0-4-4-3-4 0v7h-4z"/><circle cx="9" cy="8.500" r="2.300" fill="#fff"/></svg></div>
      <div class="pbi"><svg width="28" height="36" viewBox="0 0 28 36"><path fill="#d48c0c" d="M15 1q0-1 1-1h11q1 0 1 1v34q0 1-1 1H15z"/><path fill="#f0b81e" d="M8 10q0-1 1-1h10q1 0 1 1v26H8z"/><path fill="#f7dc68" d="M0 19q0-1 1-1h10q1 0 1 1v17H1q-1 0-1-1z"/></svg></div>
    </div>
    <div class="tray">
      <svg class="s1" width="17" height="10" viewBox="0 0 17 10"><path d="M1 9l7.500-7.500L16 9" fill="none" stroke="#fff" stroke-width="1.800"/></svg>
      <svg class="s2" width="24" height="17" viewBox="0 0 24 17"><circle cx="12" cy="7" r="6.500" fill="#8d8d8d"/><circle cx="6" cy="10" r="6" fill="#bcbcbc"/><path fill="#fff" d="M1 13l12-6c8-1 11 3 11 6 0 2-2 3.500-4 3.500H5c-3 0-4-2-4-3.500z"/></svg>
      <svg class="s3" width="25" height="25" viewBox="0 0 25 25"><path d="M1 13C1 0 17-3 23 8M23 1v7h-7M1 24v-7h7M2 17c3 6 7 7 11 7" fill="none" stroke="#fff" stroke-width="1.500"/><circle cx="18" cy="18" r="6" fill="#ff9d0a"/></svg>
      <div class="lang">ENG<br>IN</div>
      <svg class="s4" width="24" height="18" viewBox="0 0 24 18" fill="none" stroke="#fff" stroke-width="1.800"><path d="M1 6c6-7 16-7 22 0M4.500 10c4-5 11-5 15 0M8 13.500c2-3 6-3 8 0"/><circle cx="12" cy="15.500" r="1.300" fill="#fff"/></svg>
      <svg class="s5" width="24" height="20" viewBox="0 0 24 20" fill="none" stroke="#fff" stroke-width="1.600"><path d="M1 7h4l5-5v16l-5-5H1zM13 6q3 4 0 8M16 4q5 6 0 12"/><path stroke="#666" d="M19 1q7 9 0 18"/></svg>
      <svg class="s6" width="24" height="20" viewBox="0 0 24 20"><rect x="6" y="4" width="15" height="14" rx="3" fill="none" stroke="#fff" stroke-width="2"/><path fill="#fff" d="M21 8h3v6h-3zM11 7h7v8H8z"/><path fill="#fff" stroke="#1c1c1c" d="M7-1c6 4 7 13-1 16-8-2-8-8 1-16z"/><path d="M1 19c0-5 3-7 6-10" stroke="#1c1c1c" fill="none"/></svg>
      <div class="clock">20:05<br><span>18-02-2025</span></div>
    </div>
  </div>
</div>
</body>
</html>
```
FILE: styles.css
```css
* { box-sizing: border-box; }
body { margin: 0; font-family: "Open Sans", "Noto Sans", sans-serif; color: #252423; background: #f3f2f1; overflow: hidden; }
svg { display: block; flex: none; overflow: visible; }
.defs { position: absolute; }
h1, h2, h3, p { margin: 0; }
.app { width: 1920px; height: 1080px; display: grid; grid-template-rows: 51px 189px 732px 35px 73px; }

/* title bar */
.titlebar { background: #3b3a37; color: #fff; display: flex; align-items: center; padding-bottom: 0; }
.quick { display: flex; align-items: center; gap: 22px; padding-left: 23px; width: 150px; }
.quick svg { flex: none; }
.doc-title { font-size: 17px; width: 375px; white-space: nowrap; padding-top: 7px; letter-spacing: -0.1px; }
.doc-title i { font-style: normal; margin: 0 7px 0 5px; }
.title-caret { margin-left: 9px; margin-top: 3px; }
.signin { margin-left: 1052px; font-size: 17px; width: 55px; white-space: nowrap; padding-top: 2px; letter-spacing: 0.2px; }
.avatar { margin-left: 14px; }
.win-buttons { display: flex; gap: 50px; margin-left: 47px; padding-top: 4px; }

/* ribbon */
.ribbon { background: #fafafa; display: flex; flex-direction: column; box-shadow: 0 2px 6px rgba(0,0,0,.22); position: relative; z-index: 3; }
.tabs { height: 54px; display: flex; align-items: flex-start; font-size: 20px; padding-left: 34px; letter-spacing: -0.05px; }
.tabs a { padding-top: 11px; height: 47px; }
.tabs a.active { font-weight: 600; border-bottom: 5px solid #117865; }
.t1 { width: 87px; } .t2 { width: 58px; letter-spacing: -0.5px; } .t3 { margin-left: 46px; width: 100px; } .t4 { width: 136px; } .t5 { width: 91px; } .t6 { width: 132px; } .t7 { width: 50px; }
.share { margin-left: auto; margin-right: 9px; margin-top: 6px; width: 125px; height: 36px; border: 0; border-radius: 5px; background: #117865; color: #fff; font: 17px "Open Sans", sans-serif; display: flex; align-items: center; padding: 0 0 0 10px; }
.share span { width: 52px; margin-left: 12px; text-align: left; letter-spacing: -0.2px; }
.share svg:first-child { margin-top: -4px; }
.groups { display: flex; height: 132px; }
.group { border-right: 1px solid #d2d0ce; display: flex; flex-direction: column; justify-content: space-between; }
.g-clip { width: 240px; } .g-data { width: 550px; } .g-query { width: 173px; } .g-insert { width: 220px; } .g-calc { width: 278px; } .g-sens { width: 109px; } .g-share { width: 88px; } .g-copilot { width: 88px; }
.tools { display: flex; padding-top: 5px; height: 108px; }
.g-data .tools { padding-left: 9px; } .g-query .tools { padding-left: 10px; } .g-insert .tools { padding-left: 17px; } .g-calc .tools { padding-left: 10px; }
.tool { display: flex; flex-direction: column; align-items: center; font-size: 17px; line-height: 24px; text-align: center; white-space: nowrap; letter-spacing: -0.1px; }
.tool > span { margin-top: 3px; display: block; }
.ic { width: 48px; height: 50px; }
.cop { margin-left: -2px; }
.cv { display: inline-block; width: 10px; height: 7px; margin-left: 2px; vertical-align: 1px; }
.disabled { color: #c4c2c0; }
.w49 { width: 49px; } .w58 { width: 58px; } .w61 { width: 61px; } .w62 { width: 62px; } .w64 { width: 64px; } .w65 { width: 65px; } .w70 { width: 70px; } .w71 { width: 71px; } .w78 { width: 78px; } .w81 { width: 81px; } .w82 { width: 82px; } .w86 { width: 86px; } .w87 { width: 87px; } .w88 { width: 88px; } .w94 { width: 94px; } .w108 { width: 108px; } .w110 { width: 110px; }
.paste { margin-left: 19px; width: 46px; }
.paste svg { margin-left: 6px; }
.mini { margin-left: 12px; display: grid; grid-template-rows: 36px 36px 36px; font-size: 17px; letter-spacing: -0.1px; white-space: nowrap; }
.mini > div { display: flex; gap: 5px; height: 26px; align-items: center; }
.glabel { text-align: center; font-size: 14.500px; line-height: 20px; margin-bottom: -3px; letter-spacing: -0.1px; color: #323130; }
.fx { font: italic 25px "Liberation Serif", serif; fill: #a19f9d; stroke: none; }
.ribbon-end { flex: 1; display: flex; justify-content: flex-end; align-items: flex-end; padding: 0 7px 6px 0; }

/* work area */
.work { display: grid; grid-template-columns: 1378px 271px 271px; }
.left { display: grid; grid-template-columns: 61px 1fr; }
.rail { background: #f3f2f1; border-right: 1px solid #d8d6d4; }
.rail > div { height: 60px; padding: 15px 0 0 17px; }
.rail .on { border-left: 4px solid #117865; padding: 16px 0 0 13px; }
.dax { font: bold 11px "Open Sans", sans-serif; fill: #505050; stroke: #f3f2f1; stroke-width: 2px; paint-order: stroke; }
.center { display: grid; grid-template-rows: 679px 53px; }
.top { display: grid; grid-template-columns: 1268px 49px; }
.canvas { background: #fff; position: relative; overflow: hidden; }
.filters { background: #fff; border-left: 1px solid #a8a6a4; display: flex; flex-direction: column; align-items: center; padding-top: 20px; }
.filters svg + svg { margin: 23px 0 0 5px; }
.filters b { writing-mode: vertical-rl; font-size: 20.500px; font-weight: 600; line-height: 24px; margin: 9px 3px 0 0; letter-spacing: 0.15px; }

/* report page: a free canvas */
.page { position: absolute; left: 38px; top: 0; width: 1192px; height: 670px; box-shadow: 0 0 16px rgba(0,0,0,.1); }
.page h1 { position: absolute; left: 323px; top: 5px; font: bold 39.500px/46px "Liberation Serif", serif; white-space: pre; letter-spacing: -0.05px; }
.backdrop { position: absolute; left: 3px; top: 90px; right: 4px; bottom: 3px; background: #f1f1f1; }
.slicer { position: absolute; left: 63px; top: 105px; width: 205px; height: 530px; background: #fff; padding: 0 22px 6px 24px; display: flex; flex-direction: column; }
.slicer-head { height: 27px; margin: 0 -11px 0 -12px; display: flex; justify-content: space-between; align-items: center; color: #2b32c4; font: bold 16.500px Roboto, sans-serif; padding-top: 2px; }
.slicer-head svg { margin: -5px 1px 0 0; }
.tiles { flex: 1; display: grid; grid-template-rows: repeat(4, 1fr); gap: 3px; }
.tiles div { border: 1px solid #8b9266; background: #c0d733; color: #2c9da8; font-weight: 700; font-size: 11px; line-height: 15px; display: flex; align-items: center; justify-content: center; text-align: center; letter-spacing: -0.3px; }
.chart { position: absolute; border-radius: 20px; overflow: hidden; }
.c1 { left: 338px; top: 105px; background: #38d8d9; box-shadow: inset 0 0 0 2px #df2080, 7px 8px 7px rgba(222,232,160,.8); }
.c2 { left: 761px; top: 106px; background: #dbd373; box-shadow: inset 0 0 0 1.500px #2a35cc, 8px 8px 9px 1px rgba(233,150,195,.75); }
.select-box { position: absolute; left: 760px; top: 105px; width: 369px; height: 531px; border: 1px solid #e6e6e6; z-index: 1; }
.din { font: bold 16.500px Roboto, sans-serif; text-anchor: middle; }
.grid1, .grid2 { stroke: #aee7e6; stroke-dasharray: 1.500 3; }
.grid2 { stroke: #e9e4ac; }
.ax1, .ax2 { font-weight: 700; font-size: 15.500px; text-anchor: end; fill: #f07a10; }
.ax2 { fill: #df1f80; font-size: 15px; }
.val { font-weight: 700; font-size: 15.500px; text-anchor: middle; fill: #fff; }
.v2 { font-size: 14.500px; }
.cat1 { font-weight: 700; font-size: 12.500px; text-anchor: end; fill: #f07a10; }
.cat2 { font-weight: 700; font-size: 13px; text-anchor: middle; fill: #df1f80; }
.vis-tools { position: absolute; left: 1009px; top: 72px; display: flex; gap: 5px; }
.vis-tools span { width: 36px; height: 31px; padding-bottom: 1px; background: #fff; display: flex; align-items: center; justify-content: center; }
.vis-tools path { fill: none; stroke: #605e5c; stroke-width: 1.400; }
.dots { position: absolute; }
.dl, .dr { width: 3px; top: 2px; bottom: 0; background: repeating-linear-gradient(#6b6970 0 3px, #fff 3px 6px); }
.dl { left: 0; } .dr { right: 0; }
.db { height: 3px; left: 0; right: 0; bottom: 0; background: repeating-linear-gradient(90deg, #6b6970 0 3px, #fff 3px 6px); }

/* page tabs */
.pages { display: flex; background: #f3f2f1; }
.modes { width: 192px; border-right: 1px solid #a8a6a4; display: flex; align-items: flex-start; padding-left: 15px; }
.desk { width: 36px; height: 46px; padding: 10px 0 0 2px; border-bottom: 4px solid #117865; }
.phone { margin: 7px 0 0 38px; }
.prev { margin: 20px 0 0 31px; }
.pt { width: 109px; background: #fff; border-right: 1px solid #c0bebc; font-size: 17px; display: flex; align-items: center; justify-content: center; letter-spacing: -0.1px; padding-top: 2px; position: relative; }
.cur { width: 111px; font-weight: 600; border-bottom: 6px solid #117865; padding-top: 8px; letter-spacing: -0.4px; }
.cur i { position: absolute; right: 8px; top: 2px; font-style: normal; font-size: 15px; }
.pt:nth-child(6) { width: 108px; }
.plus { width: 58px; background: #117865; display: flex; align-items: center; justify-content: center; }

/* side panes */
.viz, .data { background: #f3f2f1; border-left: 1px solid #d8d6d4; }
.viz { display: flex; flex-direction: column; }
.pane-head { display: flex; justify-content: space-between; align-items: center; height: 58px; padding: 0 12px 0 12px; }
h2 { font-size: 22.500px; font-weight: 600; letter-spacing: -0.1px; }
h3 { font-size: 17px; font-weight: 600; padding-left: 12px; line-height: 22px; letter-spacing: -0.15px; }
.modes2 { display: flex; gap: 56px; padding: 6px 0 0 12px; height: 61px; }
.modes2 > svg { margin-top: 5px; }
.bm { width: 48px; height: 48px; background: #d2d0ce; border-radius: 4px; padding: 5px; }
.notch { margin-bottom: 13px; }
.icons { display: grid; grid-template-columns: repeat(6, 42px); grid-auto-rows: 42px; padding-left: 16px; height: 294px; margin-top: 1px; }
.icons svg { width: 28px; height: 28px; }
.icons svg:nth-child(n+37) { height: 30px; margin-top: -1px; }
.k { fill: none; stroke: #3b3a39; stroke-width: 1.800; }
.w { fill: #fafafa; stroke: #3b3a39; stroke-width: 1.300; }
.k2 { stroke-width: 1.800; }
.b { fill: #83beec; stroke: #0f6cbd; stroke-width: 1.600; }
.bubble { stroke: #0f6cbd; stroke-width: 1.700; }
.g { fill: #c8c6c4; stroke: #797775; stroke-width: 1.500; }
.gg { fill: none; stroke: #797775; stroke-width: 1.500; }
.l { fill: none; stroke: #1e7fc8; stroke-width: 1.700; }
.t { stroke-width: 3; } .t2 { stroke-width: 2.600; }
.o { fill: none; stroke: #e07400; stroke-width: 2.500; }
.n123 { font-size: 12.500px; letter-spacing: -0.3px; fill: #1e88d2; }
.rpy { font-size: 25px; font-weight: 700; fill: #1e88c8; }
.more { height: 41px; padding: 0 0 0 16px; font-size: 26px; line-height: 6px; letter-spacing: 2.500px; }
.fields { border-top: 1px solid #d8d6d4; flex: 1; display: flex; }
.f-main { flex: 1; padding-left: 6px; }
.f-main p { font-size: 17px; padding-left: 12px; height: 45px; padding-top: 13px; letter-spacing: -0.1px; color: #3b3a39; }
.well { background: #fff; border: 1px dashed #c0bebc; border-radius: 3px; height: 42px; font-size: 17px; line-height: 37px; padding-left: 15px; letter-spacing: 0.05px; }
.f-main .dt { font-weight: 600; height: 44px; padding-top: 16px; color: #505050; letter-spacing: -0.05px; }
.row { display: flex; justify-content: space-between; align-items: center; height: 40px; padding: 0 23px 0 12px; font-size: 17px; margin-bottom: 0; letter-spacing: 0; }
.tg { width: 48px; height: 24px; border-radius: 12px; background: #117865; color: #fff; font-size: 13.500px; display: flex; align-items: center; justify-content: space-between; padding: 0 7px; letter-spacing: -0.3px; }
.tg i { width: 12px; height: 12px; border-radius: 6px; background: #fff; }
.off { background: #fff; border: 1px solid #8a8886; color: #605e5c; padding: 0 6px; }
.off i { background: #605e5c; }
.scroll { width: 9px; height: 171px; margin: 3px 0 0 1px; background: #d2d0ce; border-radius: 5px; }
.search { margin: 10px 7px 0 6px; height: 36px; border: 1px solid #c8c6c4; border-bottom-color: #605e5c; border-radius: 5px; background: #fff; display: flex; align-items: center; gap: 9px; padding-left: 18px; font-size: 19.500px; color: #605e5c; letter-spacing: 0; }
.search span { padding-top: 1px; }
.tree { display: flex; align-items: center; gap: 9px; margin: 21px 0 0 24px; font-size: 16.800px; letter-spacing: 0; }
.tree span { margin-left: -1px; }

/* status bar */
.status { border-top: 1px solid #d8d6d4; background: #f3f2f1; display: flex; align-items: center; color: #505050; font-size: 17px; }
.pg { width: 1594px; padding: 1px 0 0 6px; letter-spacing: 0.050px; }
.zoomer { margin: 1px 0 0 6px; }
.pct { width: 63px; margin-left: 16px; letter-spacing: -0.1px; margin-top: -2px; }
.fit { margin-top: 1px; }

/* taskbar */
.taskbar { background: #1c1c1c; border-top: 1px solid #000; box-shadow: inset 0 2px #444; display: flex; color: #fff; align-items: flex-start; }
.weather { width: 386px; padding: 11px 0 0 29px; position: relative; }
.weather b { position: absolute; left: 54px; top: 11px; font-weight: 400; font-size: 16px; color: #222; line-height: 24px; }
.win { margin-top: 19px; }
.tsearch { margin: 12px 0 0 20px; width: 330px; height: 48px; border-radius: 24px; background: #3a3a3a; border: 1px solid #4c4c4c; border-top-color: #666; display: flex; align-items: center; padding: 0 7px 0 17px; font-size: 19px; color: #d8d8d8; letter-spacing: 0.1px; }
.tsearch span { margin-left: 14px; flex: 1; }
.apps { display: flex; margin-left: 3px; }
.apps > div { width: 66px; height: 72px; display: flex; justify-content: center; align-items: center; position: relative; }
.run::after, .pbi::after { content: ""; position: absolute; bottom: 6px; left: 29px; width: 8px; height: 5px; border-radius: 3px; background: #9a9a9a; }
.apps .pbi { width: 60px; height: 60px; margin: 6px 3px; background: #292929; border: 1px solid #333; border-radius: 6px; }
.pbi::after { background: #4cc2ff; width: 24px; left: 17px; bottom: 0; }
.tray { display: flex; align-items: center; height: 72px; margin-left: 102px; font-size: 16.500px; line-height: 23.500px; }
.s2 { margin-left: 27px; } .s3 { margin-left: 24px; }
.lang { width: 60px; margin-left: 15px; text-align: center; }
.s4 { margin-left: 15px; } .s5 { margin-left: 11px; } .s6 { margin-left: 12px; }
.clock { width: 119px; text-align: right; letter-spacing: 0; }
.clock span { letter-spacing: 0.65px; margin-right: -0.65px; }
```
